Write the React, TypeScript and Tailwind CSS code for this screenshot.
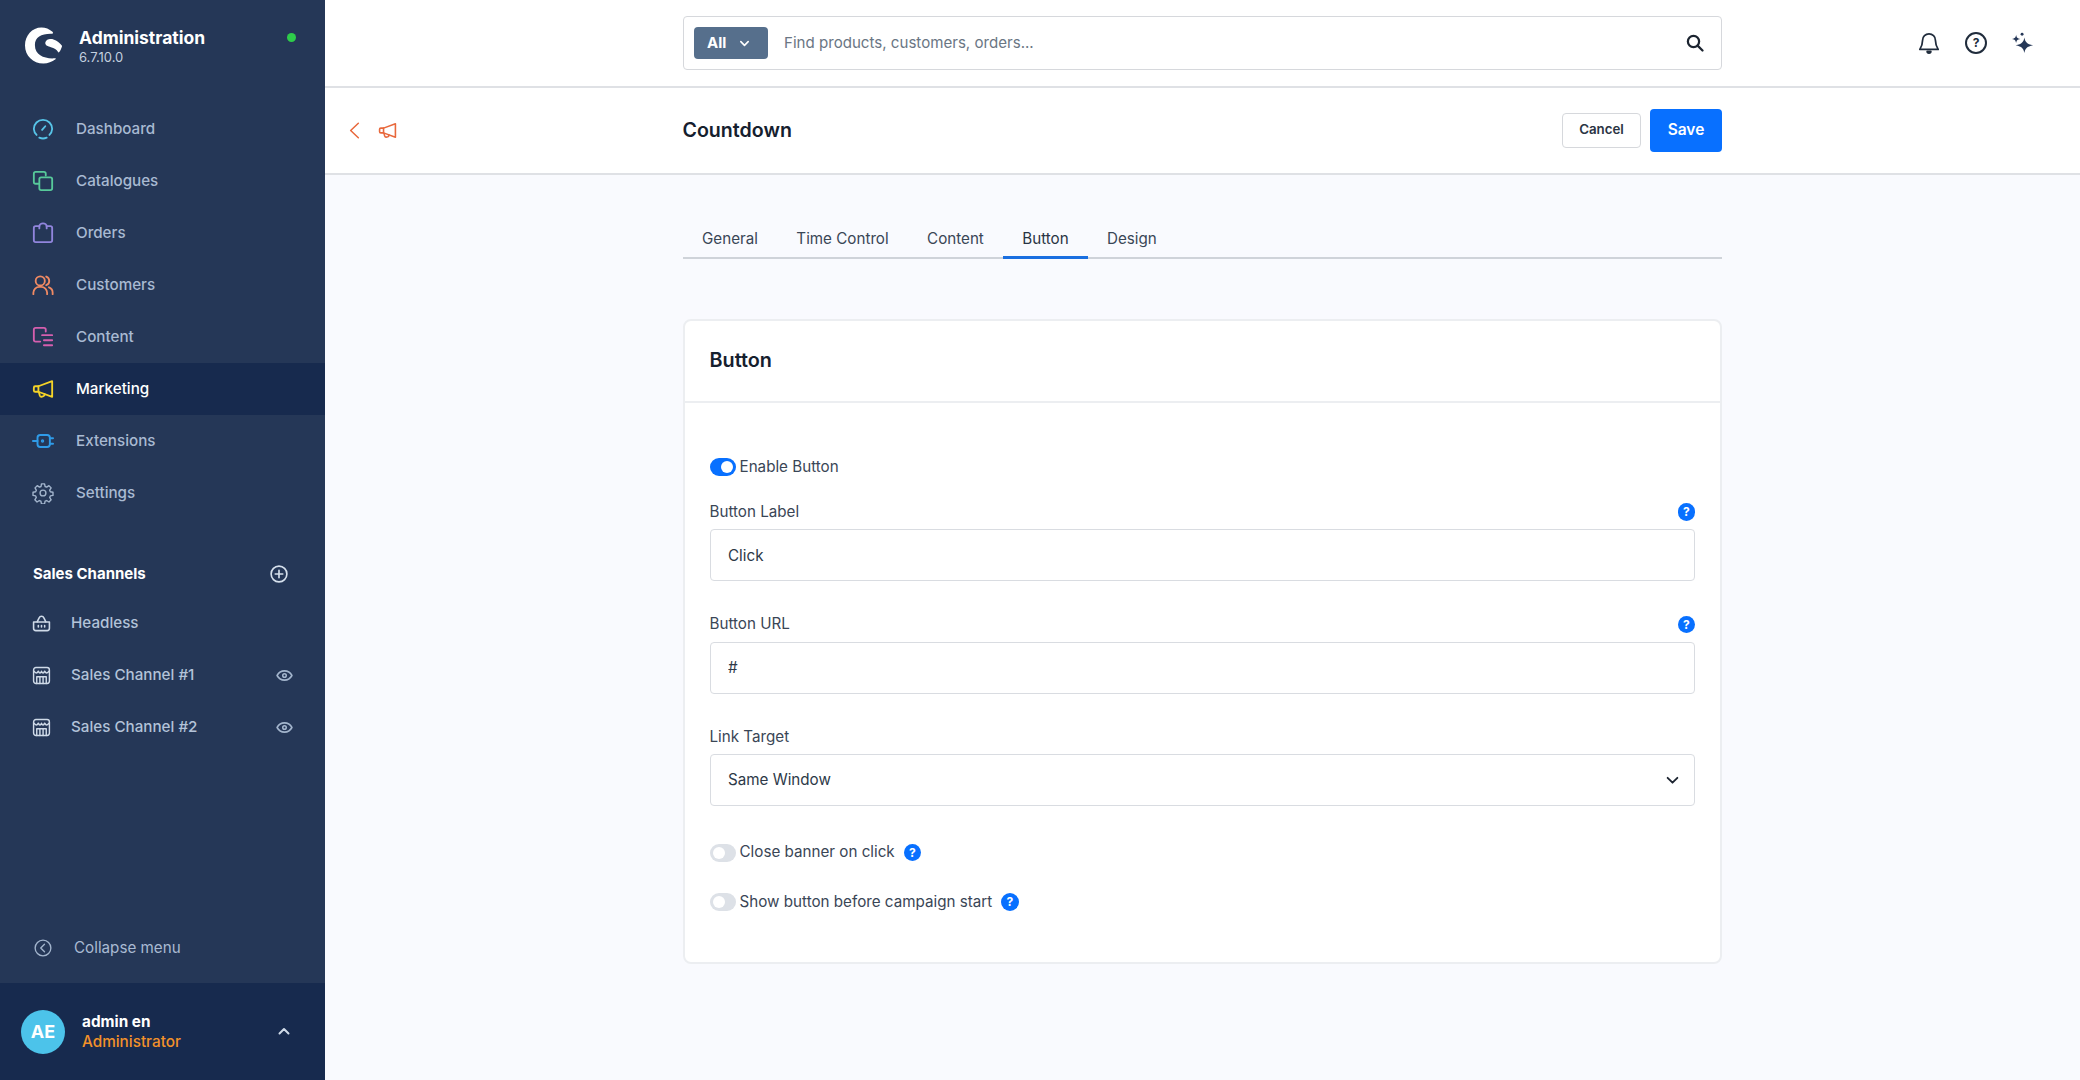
import React from "react";

type IP = { className?: string };
const S = ({ className, children, sw = 2 }: IP & { children: React.ReactNode; sw?: number }) => (
  <svg viewBox="0 0 24 24" fill="none" stroke="currentColor" strokeWidth={sw} strokeLinecap="round" strokeLinejoin="round" className={className}>
    {children}
  </svg>
);

const Logo = () => (
  <svg viewBox="0 0 37 36" className="w-[37px] h-[37px] shrink-0" fill="#fff">
    <path d="M27.5 4.3C24 1.5 20.8 0 16.5 0 7 0 0 8 0 18c0 10.3 8 18 18.4 18 4.6 0 8.6-1.500 12.100-4.200.6-.5.2-1-.6-1-9.800.7-20-2.400-20-13.200C9.900 9.300 16.800 5.900 27.200 6.300c1 0 1-1.300.3-2Z" />
    <path d="M20.300 15.800c0-3.500 4.400-5 8.200-3.900 3.400 1 6.500 3.400 8.300 6.200.3.500.2 1-.1 1.600-.6 1.700-1.400 3.700-2.700 5-.4.400-.7.200-.9-.2-1.500-2.600-3.900-3.800-7.200-4.800-3-.9-5.600-1.800-5.600-3.900Z" />
  </svg>
);

const Dashboard = (p: IP) => (
  <S {...p}>
    <path d="M5 18.500A10 10 0 0 1 2 12 10 10 0 0 1 12 2a10 10 0 0 1 10 10 10 10 0 0 1-3 6.500" />
    <path d="M8 21.500a10 10 0 0 0 8 0" />
    <path d="M11 13l3.500-4" />
  </S>
);
const Catalogues = (p: IP) => (
  <S {...p}>
    <path d="M15 6V4a2 2 0 0 0-2-2H4a2 2 0 0 0-2 2v9a2 2 0 0 0 2 2h3" />
    <rect x="8" y="8" width="14" height="14" rx="2" />
  </S>
);
const Orders = (p: IP) => (
  <S {...p}>
    <path d="M8 4.500H4a2 2 0 0 0-2 2V20a2 2 0 0 0 2 2h16a2 2 0 0 0 2-2V6.500a2 2 0 0 0-2-2h-4" />
    <path d="M8 7V4.500a4 3 0 0 1 8 0V7" />
  </S>
);
const Customers = (p: IP) => (
  <S {...p}>
    <circle cx="9" cy="7.500" r="5" />
    <path d="M1.500 22v-1.500A6.500 6.500 0 0 1 8 14h2a6.500 6.500 0 0 1 6.500 6.500V22" />
    <path d="M15.500 2.800a5 5 0 0 1 0 9.400M18.500 14.500a6 6 0 0 1 4 5.700V22" />
  </S>
);
const Content = (p: IP) => (
  <S {...p}>
    <path d="M15 6V4a2 2 0 0 0-2-2H4a2 2 0 0 0-2 2v11a2 2 0 0 0 2 2h5" />
    <path d="M11 10h11M13 15.500h9M13 21h9" />
  </S>
);
const Megaphone = (p: IP) => (
  <S {...p}>
    <path d="M22 3.500v17L7 15H3.500A1.500 1.500 0 0 1 2 13.500v-3A1.500 1.500 0 0 1 3.500 9H7Z" />
    <path d="M7 9v6M7.500 15.500l1 3.500a2 2 0 0 0 2.500 1.300l1.500-.5a2 2 0 0 0 1.200-2.300" />
  </S>
);
const Plug = (p: IP) => (
  <S {...p} sw={2.100}>
    <rect x="6" y="5.500" width="13.500" height="13" rx="3" />
    <path d="M1 12h5M19.500 9H23M19.500 15H23" />
    <circle cx="11.500" cy="12" r="0.800" />
  </S>
);
const Gear = (p: IP) => (
  <S {...p} sw={1.500}>
    <circle cx="12" cy="12" r="3.200" />
    <path d="M10.300 2h3.400l.6 2.900 1.700.7 2.500-1.600 2.400 2.400-1.600 2.500.7 1.700 2.900.6v3.400l-2.900.6-.7 1.700 1.600 2.500-2.400 2.400-2.500-1.600-1.700.7-.6 2.900h-3.400l-.6-2.900-1.700-.7-2.500 1.600-2.400-2.400 1.600-2.500-.7-1.700-2.900-.6v-3.400l2.900-.6.700-1.700L3.300 6.400l2.400-2.400 2.500 1.600 1.700-.7Z" />
  </S>
);
const Basket = (p: IP) => (
  <S {...p} sw={2}>
    <path d="M2 10h20v8a3 3 0 0 1-3 3H5a3 3 0 0 1-3-3Z" />
    <path d="M6.500 10 9 5a3.200 3.200 0 0 1 6 0L17.500 10" />
    <path d="M8 14.500v2M12 14.500v2M16 14.500v2" />
  </S>
);
const Store = (p: IP) => (
  <S {...p} sw={1.800}>
    <rect x="2" y="2" width="20" height="20" rx="3" />
    <path d="M2.500 6.500c1.800 3 4 3 5.500 0 1.300 3 2.800 3 4 0 1.200 3 2.700 3 4 0 1.500 3 3.700 3 5.500 0" />
    <path d="M6 22v-8.500h12V22M10 13.500V22M14 13.500V22" />
  </S>
);
const Eye = (p: IP) => (
  <S {...p} sw={2.200}>
    <path d="M1.500 12C4 7.500 8 5.500 12 5.500s8 2 10.500 6.500C20 16.500 16 18.500 12 18.500S4 16.500 1.500 12Z" />
    <circle cx="12" cy="12" r="2.500" />
  </S>
);
const HelpDot = () => (
  <span className="w-[17.500px] h-[17.500px] rounded-full bg-[#0870ff] text-white text-[12px] font-bold flex items-center justify-center shrink-0 leading-none">?</span>
);

const nav: [string, (p: IP) => React.ReactElement, string, boolean?][] = [
  ["Dashboard", Dashboard, "text-[#57c4e8]"],
  ["Catalogues", Catalogues, "text-[#57c99a]"],
  ["Orders", Orders, "text-[#9185dd]"],
  ["Customers", Customers, "text-[#f08a63]"],
  ["Content", Content, "text-[#d55fae]"],
  ["Marketing", Megaphone, "text-[#f5d327]", true],
  ["Extensions", Plug, "text-[#2f9be8]"],
  ["Settings", Gear, "text-[#a3b5cd]"],
];

const Channel = ({ name, icon: I, eye }: { name: string; icon: (p: IP) => React.ReactElement; eye?: boolean }) => (
  <div className="h-[52px] flex items-center pl-[32px] pr-[32px]">
    <I className="w-[19px] h-[19px] text-[#cfdae8]" />
    <span className="ml-[20px] text-[15.200px] font-medium text-[#b3c3d9]">{name}</span>
    {eye && <Eye className="ml-auto w-[17px] h-[17px] text-[#a3b5cd]" />}
  </div>
);

const Toggle = ({ on, label, help }: { on?: boolean; label: string; help?: boolean }) => (
  <div className="flex items-center h-[18px]">
    {on ? (
      <span className="w-[26px] h-[18px] rounded-full bg-[#0870ff] flex items-center justify-end pr-[3px]">
        <span className="w-[12px] h-[12px] rounded-full bg-white" />
      </span>
    ) : (
      <span className="w-[26px] h-[18px] rounded-full bg-[#dde1e7] flex items-center pl-[3px]">
        <span className="w-[12px] h-[12px] rounded-full bg-white" />
      </span>
    )}
    <span className="ml-[4px] text-[15.200px] text-[#3a4656]">{label}</span>
    {help && <span className="ml-[9px]"><HelpDot /></span>}
  </div>
);

const Field = ({ label, value, help }: { label: string; value: string; help?: boolean }) => (
  <div>
    <div className="h-[18px] flex items-center justify-between text-[15.200px] text-[#3a4656]">
      <span>{label}</span>
      {help && <HelpDot />}
    </div>
    <input readOnly value={value} className="mt-[8px] w-full h-[52px] border-[1.500px] border-[#d9dce1] rounded-[4px] bg-white px-[17.500px] text-[15.200px] text-[#2d3948] outline-none" />
  </div>
);

export default function App() {
  const tabs = ["General", "Time Control", "Content", "Button", "Design"];
  return (
    <div className="flex w-full h-screen overflow-hidden font-['Inter',sans-serif] bg-[#f9fafe]">
      <aside className="w-[325px] shrink-0 bg-[#253757] flex flex-col">
        <div className="h-[103px] shrink-0 pl-[25px] pr-[29px] pt-[27px] flex items-start">
          <Logo />
          <div className="ml-[17px]">
            <div className="text-[17.500px] leading-[22px] font-bold text-white">Administration</div>
            <div className="text-[13px] leading-[16px] text-[#c3cfdf]">6.7.10.0</div>
          </div>
          <span className="ml-auto mt-[5.500px] w-[9px] h-[9px] rounded-full bg-[#2ecc4a]" />
        </div>
        {nav.map(([name, I, c, active]) => (
          <div key={name} className={`h-[52px] shrink-0 flex items-center pl-[32px] ${active ? "bg-[#172a4e]" : ""}`}>
            <I className={`w-[22px] h-[22px] ${c}`} />
            <span className={`ml-[22px] text-[15.200px] font-medium ${active ? "text-white" : "text-[#a9bad2]"}`}>{name}</span>
          </div>
        ))}
        <div className="mt-[45px] h-[20px] flex items-center justify-between pl-[33px] pr-[37px]">
          <span className="text-[15px] font-bold text-white">Sales Channels</span>
          <svg viewBox="0 0 24 24" className="w-[18px] h-[18px] text-[#d6e0ec]" fill="none" stroke="currentColor" strokeWidth="2.200" strokeLinecap="round">
            <circle cx="12" cy="12" r="10.500" />
            <path d="M12 7v10M7 12h10" />
          </svg>
        </div>
        <div className="mt-[13px]">
          <Channel name="Headless" icon={Basket} />
          <Channel name="Sales Channel #1" icon={Store} eye />
          <Channel name="Sales Channel #2" icon={Store} eye />
        </div>
        <div className="mt-auto h-[60px] flex items-start pl-[34px] pt-[14px]">
          <svg viewBox="0 0 24 24" className="mt-[2px] w-[18px] h-[18px] text-[#a3b5cd]" fill="none" stroke="currentColor" strokeWidth="1.800" strokeLinecap="round" strokeLinejoin="round">
            <circle cx="12" cy="12" r="10.500" />
            <path d="M14 7l-5 5 5 5" />
          </svg>
          <span className="ml-[22px] text-[15.200px] text-[#a9bad2]">Collapse menu</span>
        </div>
        <div className="h-[97px] shrink-0 bg-[#172a4e] flex items-center pl-[21px] pr-[35px]">
          <span className="w-[44px] h-[44px] rounded-full bg-[#4cc3ea] text-white font-bold text-[18px] flex items-center justify-center">AE</span>
          <div className="ml-[17px]">
            <div className="text-[15.300px] leading-[20px] font-bold text-white">admin en</div>
            <div className="text-[15.300px] leading-[20px] font-medium text-[#f2912a]">Administrator</div>
          </div>
          <svg viewBox="0 0 24 24" className="ml-auto -mt-[2px] w-[12px] h-[12px] text-[#cfdae8]" fill="none" stroke="currentColor" strokeWidth="4" strokeLinecap="round" strokeLinejoin="round">
            <path d="M3 17l9-9 9 9" />
          </svg>
        </div>
      </aside>

      <main className="flex-1 min-w-0 flex flex-col">
        <header className="h-[88px] shrink-0 bg-white border-b-2 border-[#dfe1e5] flex items-center pl-[357.500px] pr-[46px]">
          <div className="w-[1039.500px] h-[54px] border-[1.500px] border-[#d6d8dc] rounded-[4px] flex items-center pl-[10.500px] pr-[17px]">
            <span className="w-[74px] h-[32px] rounded-[4px] bg-[#566f8c] text-white flex items-center pl-[13px] text-[15px] font-bold">
              All
              <svg viewBox="0 0 24 24" className="ml-[13px] w-[11px] h-[11px]" fill="none" stroke="currentColor" strokeWidth="3.500" strokeLinecap="round" strokeLinejoin="round"><path d="M4 8l8 8 8-8" /></svg>
            </span>
            <input placeholder="Find products, customers, orders..." className="ml-[16px] flex-1 text-[15.100px] text-[#5e6b7a] placeholder:text-[#6a7684] outline-none bg-transparent" />
            <svg viewBox="0 0 24 24" className="w-[18px] h-[18px] text-[#1c2430]" fill="none" stroke="currentColor" strokeWidth="3" strokeLinecap="round">
              <circle cx="10" cy="10" r="7.500" />
              <path d="M15.500 15.500 22 22" />
            </svg>
          </div>
          <div className="ml-auto flex items-center gap-[25px]">
            <svg viewBox="0 0 24 24" className="w-[22px] h-[22px] text-[#202c3c]" fill="none" stroke="currentColor" strokeWidth="1.900" strokeLinecap="round" strokeLinejoin="round">
              <path d="M12 2a7 7 0 0 0-7 7c0 5-1.200 7-3 10h20c-1.800-3-3-5-3-10a7 7 0 0 0-7-7Z" />
              <path d="M10 21a2 2 0 0 0 4 0Z" fill="currentColor" />
            </svg>
            <span className="w-[22px] h-[22px] rounded-full border-2 border-[#202c3c] text-[#202c3c] text-[12px] font-bold flex items-center justify-center leading-none">?</span>
            <svg viewBox="0 0 24 24" className="w-[22px] h-[22px] text-[#253757]" fill="currentColor">
              <path d="M13.500 6c.9 5 2.500 7 9.500 8.500-7 1.500-8.600 3.500-9.500 8.500-.9-5-2.500-7-9.500-8.500 7-1.500 8.600-3.500 9.500-8.500Z" />
              <path d="M4.500 3c.5 3 1.300 4 4.500 4.500C5.800 8 5 9 4.500 12 4 9 3.200 8 0 7.500 3.200 7 4 6 4.500 3Z" />
              <circle cx="11" cy="2.500" r="1.600" />
            </svg>
          </div>
        </header>

        <div className="h-[87px] shrink-0 bg-white border-b-2 border-[#dfe1e5] flex items-center pr-[358px] pb-[1px]">
          <div className="w-[357.500px] pl-[24px] flex items-center gap-[18px] text-[#e8683c]">
            <svg viewBox="0 0 12 20" className="w-[11px] h-[17px]" fill="none" stroke="currentColor" strokeWidth="1.800" strokeLinecap="round" strokeLinejoin="round"><path d="M10.500 1.500 1.500 10l9 8.500" /></svg>
            <Megaphone className="w-[19px] h-[19px]" />
          </div>
          <h1 className="pt-[1.500px] text-[19.600px] font-semibold text-[#15202e]">Countdown</h1>
          <div className="ml-auto flex items-center gap-[9px]">
            <span className="w-[79px] h-[35px] border-[1.500px] border-[#d6d8dc] rounded-[4px] bg-white text-[13.300px] font-semibold text-[#2a3443] flex items-center justify-center">Cancel</span>
            <span className="w-[72px] h-[43px] rounded-[4px] bg-[#0870ff] text-white text-[15.500px] font-semibold flex items-center justify-center">Save</span>
          </div>
        </div>

        <div className="flex-1 pl-[357.500px] pr-[358px]">
          <div className="mt-[45px] h-[39px] border-b-2 border-[#cfd3d9] flex pl-[19.500px] gap-[38.400px]">
            {tabs.map((t) => (
              <span key={t} className={`relative h-[39px] text-[15.200px] leading-[38px] ${t === "Button" ? "text-[#2a3443]" : "text-[#3a4656]"}`}>
                {t}
                {t === "Button" && <span className="absolute -left-[19px] -right-[19px] bottom-0 h-[3px] bg-[#1a6fe0]" />}
              </span>
            ))}
          </div>
          <section className="mt-[60px] h-[645px] bg-white border-2 border-[#eceef1] rounded-[8px]">
            <div className="h-[82px] border-b-2 border-[#eceef1] flex items-center pl-[25px]">
              <h2 className="text-[19.800px] font-semibold text-[#15202e]">Button</h2>
            </div>
            <div className="px-[25px] pt-[55px]">
              <Toggle on label="Enable Button" />
              <div className="mt-[27px]"><Field label="Button Label" value="Click" help /></div>
              <div className="mt-[34.500px]"><Field label="Button URL" value="#" help /></div>
              <div className="mt-[34.500px]">
                <div className="h-[18px] flex items-center text-[15.200px] text-[#3a4656]">Link Target</div>
                <div className="mt-[8px] h-[52px] border-[1.500px] border-[#d9dce1] rounded-[4px] bg-white pl-[17.500px] pr-[15px] flex items-center justify-between text-[15.200px] text-[#2d3948]">
                  Same Window
                  <svg viewBox="0 0 24 24" className="w-[13px] h-[13px] text-[#1c2430]" fill="none" stroke="currentColor" strokeWidth="3.400" strokeLinecap="round" strokeLinejoin="round"><path d="M3 7l9 9 9-9" /></svg>
                </div>
              </div>
              <div className="mt-[37.500px]"><Toggle label="Close banner on click" help /></div>
              <div className="mt-[31.500px]"><Toggle label="Show button before campaign start" help /></div>
            </div>
          </section>
        </div>
      </main>
    </div>
  );
}
